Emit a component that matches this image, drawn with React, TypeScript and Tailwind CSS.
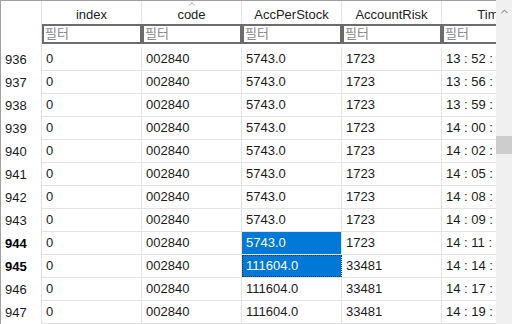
import { ChevronUp } from 'lucide-react'

type Row = { no: number; idx: string; code: string; acc: string; risk: string; time: string; bold?: boolean }

const rows: Row[] = [
  { no: 936, idx: '0', code: '002840', acc: '5743.0', risk: '1723', time: '13 : 52 : 11' },
  { no: 937, idx: '0', code: '002840', acc: '5743.0', risk: '1723', time: '13 : 56 : 11' },
  { no: 938, idx: '0', code: '002840', acc: '5743.0', risk: '1723', time: '13 : 59 : 11' },
  { no: 939, idx: '0', code: '002840', acc: '5743.0', risk: '1723', time: '14 : 00 : 11' },
  { no: 940, idx: '0', code: '002840', acc: '5743.0', risk: '1723', time: '14 : 02 : 11' },
  { no: 941, idx: '0', code: '002840', acc: '5743.0', risk: '1723', time: '14 : 05 : 11' },
  { no: 942, idx: '0', code: '002840', acc: '5743.0', risk: '1723', time: '14 : 08 : 11' },
  { no: 943, idx: '0', code: '002840', acc: '5743.0', risk: '1723', time: '14 : 09 : 11' },
  { no: 944, idx: '0', code: '002840', acc: '5743.0', risk: '1723', time: '14 : 11 : 11', bold: true },
  { no: 945, idx: '0', code: '002840', acc: '111604.0', risk: '33481', time: '14 : 14 : 11', bold: true },
  { no: 946, idx: '0', code: '002840', acc: '111604.0', risk: '33481', time: '14 : 17 : 11' },
  { no: 947, idx: '0', code: '002840', acc: '111604.0', risk: '33481', time: '14 : 19 : 11' },
]

const headers = ['index', 'code', 'AccPerStock', 'AccountRisk', 'Time']

// 셀 공통 스타일
const cell = 'w-[100px] shrink-0 h-full border-r border-[#e3e3e3] pl-[4px] flex items-center overflow-hidden whitespace-nowrap'

export default function App() {
  return (
    <div className="w-[512px] h-[324px] flex bg-white overflow-hidden font-['Liberation_Sans','Noto_Sans_CJK_KR',sans-serif] text-[13px] text-[#1a1a1a]">
      <div className="w-[496px] h-full overflow-hidden border-l border-t border-[#a0a0a0]">
        <div className="w-[600px]">
          {/* 헤더 */}
          <div className="flex h-[22px]">
            <div className="w-[41px] shrink-0 border-r border-[#e3e3e3]" />
            {headers.map(h => (
              <div key={h} className="relative w-[100px] shrink-0 border-r border-[#e3e3e3] flex items-center justify-center pt-[6px] text-[#222]">
                {h === 'code' && (
                  <ChevronUp className="absolute top-[-2px] left-1/2 -translate-x-1/2 w-[10px] h-[10px] text-[#777]" strokeWidth={1.5} />
                )}
                {h}
              </div>
            ))}
          </div>
          {/* 필터 */}
          <div className="flex h-[25px]">
            <div className="w-[41px] shrink-0 border-r border-[#e3e3e3]" />
            {headers.map(h => (
              <div key={h} className="w-[100px] shrink-0 pt-[1px]">
                <div className="h-[20px] border-2 border-[#6c6c6c] flex items-center pl-[1px] text-[#8a8a8a] text-[13px]">
                  필터
                </div>
              </div>
            ))}
          </div>
          {/* 본문 */}
          {rows.map(r => (
            <div key={r.no} className="flex h-[23px]">
              <div className={`w-[41px] shrink-0 border-r border-[#e3e3e3] pl-[4px] flex items-center ${r.bold ? 'font-bold text-black' : ''}`}>
                {r.no}
              </div>
              <div className="flex flex-1 border-b border-[#e3e3e3]">
                <div className={cell}>{r.idx}</div>
                <div className={cell}>{r.code}</div>
                <div
                  className={`${cell} ${r.bold ? 'bg-[#0078d7] text-white' : ''} ${r.no === 945 ? 'outline-1 outline-dotted outline-[#2a3a4a] -outline-offset-1' : ''}`}
                >
                  {r.acc}
                </div>
                <div className={cell}>{r.risk}</div>
                <div className={cell}>{r.time}</div>
              </div>
            </div>
          ))}
        </div>
      </div>
      {/* 스크롤바 */}
      <div className="w-[16px] h-full bg-[#f0f0f0] flex flex-col items-center">
        <div className="h-[22px] flex items-center justify-center">
          <ChevronUp className="w-[11px] h-[11px] text-[#606060]" strokeWidth={2} />
        </div>
        <div className="mt-[114px] w-full h-[18px] bg-[#cdcdcd]" />
      </div>
    </div>
  )
}
